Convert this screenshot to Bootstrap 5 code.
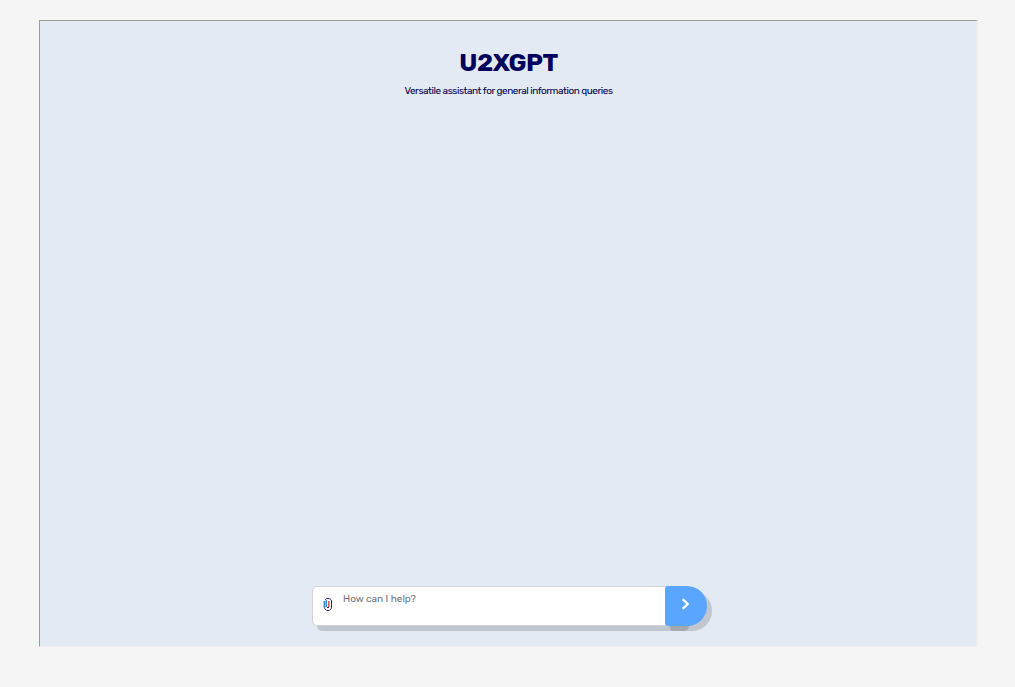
<!DOCTYPE html>
<html lang="en">
<head>
  <meta charset="UTF-8" />
  <meta name="viewport" content="width=device-width, initial-scale=1" />
  <title>U2XGPT</title>
  <link href="https://cdn.jsdelivr.net/npm/bootstrap@5.3.3/dist/css/bootstrap.min.css" rel="stylesheet" />
  <style>
    body {
      background-color: #f5f5f5;
      font-family: Rubik, Roboto, sans-serif;
      padding: 20px 37px 40px 39px;
    }
    .chat-frame {
      height: 627px;
      background-color: #e3eaf4;
      border: 1px solid #9a9a9a;
      border-right: 2px solid #eee;
      border-bottom-color: #eee;
      padding: 27px 0 20px;
    }
    .chat-title {
      color: #00005c;
      font-size: 25px;
      font-weight: 700;
      line-height: 30px;
      letter-spacing: -0.5px;
      padding-left: 1px;
    }
    .chat-subtitle {
      color: #00004d;
      font-size: 10px;
      line-height: 16px;
      letter-spacing: -0.46px;
      margin-top: 5px;
      padding-left: 1px;
    }
    .chat-form {
      width: 395px;
      height: 40px;
      margin-left: 272px;
    }
    .chat-input {
      width: 372px;
      margin-right: -19px;
      border: 1px solid #ced4da;
      border-radius: 5px;
      box-shadow: 5px 5px 0 rgba(0, 0, 0, 0.15);
      padding-left: 9px;
    }
    .chat-input svg {
      margin-top: 10px;
    }
    .chat-input textarea {
      width: 300px;
      height: 38px;
      font-size: 10px;
      line-height: 14px;
      padding: 5px 0 0;
      margin-left: 10px;
      resize: none;
      outline: none;
    }
    .chat-input textarea::placeholder {
      color: #6c757d;
      opacity: 1;
    }
    .send-btn {
      width: 42px;
      background-color: #5aa5ff;
      border-radius: 3px 20px 20px 3px;
      box-shadow: 5px 5px 0 rgba(0, 0, 0, 0.15);
      padding: 0 2px 4px 0;
    }
  </style>
</head>
<body>

<div class="chat-frame d-flex flex-column">
  <div class="text-center">
    <h1 class="chat-title mb-0">U2XGPT</h1>
    <p class="chat-subtitle mb-0">Versatile assistant for general information queries</p>
  </div>

  <!-- Message form -->
  <form class="chat-form d-flex mt-auto">
    <div class="chat-input d-flex bg-white flex-shrink-0">
      <svg class="flex-shrink-0" width="11" height="15" viewBox="0 0 11 15" fill="none" aria-hidden="true">
        <path d="M3.5 3C3.5 1.9 4.5 1.5 6 1.5S9.5 2.3 9.5 4v6c0 2.3-1.4 3.5-3.5 3.5S2.5 12.3 2.5 10" stroke="#28286e" stroke-width="1"/>
        <path d="M5 10.5h2" stroke="#28286e" stroke-width="1"/>
        <path d="M1.5 4v7" stroke="#f0b193" stroke-width="1"/>
        <path d="M2.5 4v7M4.5 3v7" stroke="#3e8de0" stroke-width="1"/>
        <path d="M3.5 3.5v6.5M7.5 4v6" stroke="#ec9c78" stroke-width="1"/>
        <path d="M6.5 4v6" stroke="#c9694f" stroke-width="1"/>
        <path d="M9.5 4v6" stroke="#28286e" stroke-width="1"/>
      </svg>
      <textarea class="border-0 bg-transparent" placeholder="How can I help?"></textarea>
    </div>
    <button type="button" class="send-btn border-0 position-relative d-flex align-items-center justify-content-center" aria-label="Send">
      <svg width="10" height="12" viewBox="0 0 10 12" fill="none" stroke="#fff" stroke-width="2.3">
        <path d="M2.7 1.2L7.7 6L2.7 10.8"/>
      </svg>
    </button>
  </form>
</div>

<script src="https://cdn.jsdelivr.net/npm/bootstrap@5.3.3/dist/js/bootstrap.bundle.min.js"></script>
</body>
</html>
